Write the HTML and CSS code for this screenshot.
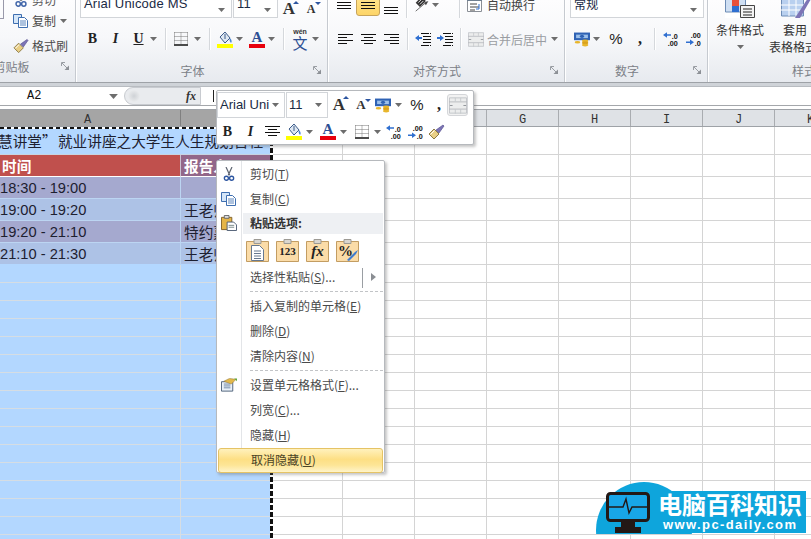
FILE: index.html
```html
<!DOCTYPE html>
<html lang="zh-CN">
<head>
<meta charset="utf-8">
<title>Excel</title>
<link rel="stylesheet" href="styles.css">
</head>
<body>
<svg class="sprite" width="0" height="0" aria-hidden="true">
  <defs>
    <symbol id="arrow" viewBox="0 0 7 4"><path d="M0 0h7L3.500 4z" fill="#6d6d6d"/></symbol>
    <symbol id="launcher" viewBox="0 0 9 9"><path d="M.5 4V.5H4M1 1l6 6" fill="none" stroke="#9a9ea4"/><path d="M8 3.500V8H3.500z" fill="#8c9096"/></symbol>
    <symbol id="copy" viewBox="0 0 16 14"><path d="M.5.500h8v9h-8z" fill="#d5e6f8" stroke="#3f6fb0"/><path d="M5.500 3.500h6l3 3v7h-9z" fill="#fff" stroke="#3f6fb0"/><path d="M7 7h6M7 9h6M7 11h6" stroke="#5d86bd"/></symbol>
    <symbol id="brush" viewBox="0 0 17 16"><path d="M1 10l5-5 5 5-5 5z" fill="#e9cf86" stroke="#8c7a45"/><path d="M2.500 10.500l4-4" stroke="#fff"/><path d="M8 6l7-5 1 1-5 7z" fill="#7d74b6" stroke="#4c4788" stroke-width=".6"/></symbol>
    <symbol id="fill" viewBox="0 0 16 17"><path d="M3 6l5-5 5 6-5 5z" fill="#dfe8f2" stroke="#3d5c8a"/><path d="M8 3v5" stroke="#3d5c8a"/><path d="M13 7c2 2 2 4 1 5-1-1-2-3-1-5z" fill="#4a86d0"/><path d="M0 13h16v4H0z" fill="#ffff00"/></symbol>
    <symbol id="borders" viewBox="0 0 14 14"><path d="M.5.500h13M.5 4.500h13M.5 8.500h13M.5.500v12M7 .5v12M13.500.500v12" fill="none" stroke="#777" stroke-dasharray="1 1"/><path d="M0 13h14" stroke="#111" stroke-width="1.500"/></symbol>
    <symbol id="align-c" viewBox="0 0 15 11"><path d="M0 .5h15M3 3.500h9M0 6.500h15M3 9.500h9" stroke="#111"/></symbol>
    <symbol id="align-l" viewBox="0 0 15 11"><path d="M0 .5h15M0 3.500h9M0 6.500h15M0 9.500h9" stroke="#111"/></symbol>
    <symbol id="align-r" viewBox="0 0 15 11"><path d="M0 .5h15M6 3.500h9M0 6.500h15M6 9.500h9" stroke="#111"/></symbol>
    <symbol id="lines" viewBox="0 0 14 8"><path d="M0 .5h14M0 3.500h14M0 6.500h14" stroke="#111"/></symbol>
    <symbol id="indent-l" viewBox="0 0 16 14"><path d="M6 1.500h10M8 4.500h8M8 7.500h8M8 10.500h8M6 13.500h10" stroke="#111" stroke-dasharray="8 1"/><path d="M0 6l4-3v2h3v2H4v2z" fill="#2f6fd0"/></symbol>
    <symbol id="indent-r" viewBox="0 0 16 14"><path d="M6 1.500h10M8 4.500h8M8 7.500h8M8 10.500h8M6 13.500h10" stroke="#111" stroke-dasharray="8 1"/><path d="M7 6L3 3v2H0v2h3v2z" fill="#2f6fd0"/></symbol>
    <symbol id="orient" viewBox="0 0 20 20"><path d="M2 9l7-7 5 5-7 7z" fill="#333"/><path d="M5 9l4-4M7 11l4-4" stroke="#fff"/><path d="M2 19l13-11" stroke="#555"/><path d="M14 12l3-5-5 2z" fill="#444"/></symbol>
    <symbol id="wrap" viewBox="0 0 15 14"><path d="M.5.500h14v13H.5z" fill="#fff" stroke="#8a8f96"/><path d="M0 0h15v3H0z" fill="#6f7f90"/><path d="M3 6h7M3 9h9M3 12h5" stroke="#444"/><path d="M12 6v5h-3" fill="none" stroke="#2f6fd0"/></symbol>
    <symbol id="merge" viewBox="0 0 20 18"><path d="M.5.500h19v17H.5z" fill="#eceded" stroke="#bfc2c6"/><path d="M0 5h20M0 13h20" stroke="#b5b8bc"/><path d="M7 .5v4M13 .5v4M7 13v5M13 13v5" stroke="#c5c8cc"/><path d="M1 9h3M16 9h3" stroke="#8b8f94"/></symbol>
    <symbol id="money" viewBox="0 0 23 20"><path d="M0 0h23v11H0z" fill="#2f62b4"/><path d="M3 3h17v5H3z" fill="#9cc0ea"/><ellipse cx="11.500" cy="5.500" rx="3" ry="2.500" fill="#2f62b4"/><ellipse cx="16" cy="12" rx="4.500" ry="2" fill="#e8b62c"/><ellipse cx="16" cy="15" rx="4.500" ry="2" fill="#d9a21d"/><ellipse cx="16" cy="18" rx="4.500" ry="2" fill="#e8b62c"/><ellipse cx="5" cy="14" rx="4" ry="1.800" fill="#e8b62c"/></symbol>
    <symbol id="dec-more" viewBox="0 0 20 17"><path d="M0 3.500L5 0v2.500h5v2H5V7z" fill="#2f6fd0"/><text x="11" y="8" class="dec-t">.0</text><text x="6" y="17" class="dec-t">.00</text></symbol>
    <symbol id="dec-less" viewBox="0 0 20 17"><text x="6" y="7" class="dec-t">.00</text><path d="M10 12.500L5 9v2.500H0v2h5V16z" fill="#2f6fd0"/><text x="11" y="17" class="dec-t">.0</text></symbol>
    <symbol id="scissors" viewBox="0 0 14 20"><path d="M3 0l5 11M11 0L6 11" stroke="#5d6470" stroke-width="1.600"/><circle cx="3.500" cy="15" r="2.700" fill="none" stroke="#2c55a0" stroke-width="1.800"/><circle cx="10.500" cy="15" r="2.700" fill="none" stroke="#2c55a0" stroke-width="1.800"/></symbol>
    <symbol id="paste" viewBox="0 0 17 17"><path d="M.5 2.500h11v13H.5z" fill="#e5b548" stroke="#80602a"/><path d="M3.500.5h5v3h-5z" fill="#ddd" stroke="#666"/><path d="M6.500 7.500h7l3 3v6h-10z" fill="#fff" stroke="#4d5c72"/><path d="M8 11h6M8 13h6" stroke="#788"/></symbol>
    <symbol id="cellfmt" viewBox="0 0 17 14"><path d="M.5 3.500h12v10H.5z" fill="#eaf1f9" stroke="#4c5f78"/><path d="M3 6h7M3 8h7M3 10h7" stroke="#6f87a5"/><path d="M3 3l6-3 7 1-5 5z" fill="#e2b84a" stroke="#8a7030" stroke-width=".5"/><path d="M14 0h3v3z" fill="#62a83a"/></symbol>
    <symbol id="clip" viewBox="0 0 23 23"><path d="M.5 2.500h22v20H.5z" fill="#fbdca8" stroke="#c39d62"/><path d="M8 .5h7v4H8z" fill="#d9d6d0" stroke="#9c9a94"/></symbol>
    <symbol id="doc" viewBox="0 0 13 16"><path d="M.5.500h8l4 4v11H.5z" fill="#fff" stroke="#66788f"/><path d="M3 6h7M3 8.500h7M3 11h7M3 13.500h7" stroke="#66788f"/></symbol>
  </defs>
</svg>

<div class="app">
  <header class="ribbon">
    <section class="group g-clip">
      <div class="g-body clip-rows">
        <div class="clip-row cut"><svg class="ic16"><use href="#scissors"/></svg><span>剪切</span></div>
        <div class="clip-row"><svg class="ic16"><use href="#copy"/></svg><span>复制</span><svg class="ar"><use href="#arrow"/></svg></div>
        <div class="clip-row"><svg class="ic16"><use href="#brush"/></svg><span>格式刷</span></div>
      </div>
      <footer class="g-label"><span class="lbl-clip">剪贴板</span><svg class="launch"><use href="#launcher"/></svg></footer>
    </section>

    <section class="group g-font">
      <div class="g-body">
        <div class="r1">
          <div class="combo c-font"><span>Arial Unicode MS</span><svg class="ar"><use href="#arrow"/></svg></div>
          <div class="combo c-size"><span>11</span><svg class="ar"><use href="#arrow"/></svg></div>
          <span class="big-a">A</span><span class="small-a">A</span>
        </div>
        <div class="r2">
          <span class="tb b">B</span><span class="tb i">I</span><span class="tb u">U</span><svg class="ar"><use href="#arrow"/></svg>
          <i class="sep"></i>
          <svg class="ic14 wide"><use href="#borders"/></svg><svg class="ar"><use href="#arrow"/></svg>
          <i class="sep"></i>
          <svg class="icfill"><use href="#fill"/></svg><svg class="ar"><use href="#arrow"/></svg>
          <span class="fc">A</span><svg class="ar"><use href="#arrow"/></svg>
          <i class="sep"></i>
          <span class="wen"><small>wén</small>文</span><svg class="ar"><use href="#arrow"/></svg>
        </div>
      </div>
      <footer class="g-label"><span>字体</span><svg class="launch"><use href="#launcher"/></svg></footer>
    </section>

    <section class="group g-align">
      <div class="g-body">
        <div class="r1">
          <svg class="ln top"><use href="#lines"/></svg>
          <span class="on"><svg class="ln"><use href="#lines"/></svg></span>
          <svg class="ln low"><use href="#lines"/></svg>
          <i class="sep s1"></i>
          <svg class="ic20"><use href="#orient"/></svg><svg class="ar"><use href="#arrow"/></svg>
          <i class="sep s2"></i>
          <div class="txt-btn"><svg class="ic15"><use href="#wrap"/></svg><span>自动换行</span></div>
        </div>
        <div class="r2">
          <svg class="al"><use href="#align-l"/></svg><svg class="al"><use href="#align-c"/></svg><svg class="al"><use href="#align-r"/></svg>
          <i class="sep s1"></i>
          <svg class="ind"><use href="#indent-l"/></svg><svg class="ind"><use href="#indent-r"/></svg>
          <i class="sep s2"></i>
          <div class="txt-btn off"><svg class="ic-merge"><use href="#merge"/></svg><span>合并后居中</span><svg class="ar"><use href="#arrow"/></svg></div>
        </div>
      </div>
      <footer class="g-label"><span>对齐方式</span><svg class="launch"><use href="#launcher"/></svg></footer>
    </section>

    <section class="group g-num">
      <div class="g-body">
        <div class="r1"><div class="combo c-num"><span>常规</span><svg class="ar"><use href="#arrow"/></svg></div></div>
        <div class="r2">
          <svg class="money"><use href="#money"/></svg><svg class="ar"><use href="#arrow"/></svg>
          <span class="pct">%</span><span class="cma">,</span>
          <i class="sep"></i>
          <svg class="dec"><use href="#dec-more"/></svg><svg class="dec"><use href="#dec-less"/></svg>
        </div>
      </div>
      <footer class="g-label"><span>数字</span><svg class="launch"><use href="#launcher"/></svg></footer>
    </section>

    <section class="group g-style">
      <div class="g-body styles">
        <div class="big-btn b1">
          <svg class="st-ic" viewBox="0 0 30 18"><path d="M0 0h30v18H0z" fill="#fff"/><path d="M.5-2h20v14H.5z" fill="#cfdff3" stroke="#6d8cb5"/><path d="M7-2h7v8H7z" fill="#e8503a"/><path d="M7 6h7v6H7z" fill="#2f6fd0"/><path d="M15.500 5.500h14v12h-14z" fill="#f4f4f4" stroke="#444"/><path d="M18 9h9M18 12h9M18 15h9" stroke="#222"/></svg>
          <span>条件格式</span><svg class="ar"><use href="#arrow"/></svg>
        </div>
        <div class="big-btn b2">
          <svg class="st-ic" viewBox="0 0 30 18"><path d="M.5-2h22v18H.5z" fill="#b9d0ef" stroke="#6d8cb5"/><path d="M8-2v18M15-2v18M0 5h23M0 10h23" stroke="#fff"/><path d="M14 18L27-2l3 1-11 19z" fill="#7d74b6"/></svg>
          <span class="b2-top">套用</span><span>表格格式</span>
        </div>
      </div>
      <footer class="g-label"><span>样式</span></footer>
    </section>
  </header>

  <div class="gap-band"></div>

  <div class="fbar">
    <div class="namebox"><span>A2</span><svg class="ar dark"><use href="#arrow"/></svg></div>
    <div class="capsule"><i class="knob"></i><span class="fx">fx</span></div>
    <div class="finput"><span class="caret"></span><span class="ftext">慧讲堂</span></div>
  </div>
  <div class="fgap"></div>

  <main class="sheet">
    <div class="cols">
      <div class="col sel a">A</div><div class="col sel b"></div>
      <div class="col"></div><div class="col"></div><div class="col"></div>
      <div class="col">G</div><div class="col">H</div><div class="col">I</div><div class="col">J</div><div class="col">K</div>
    </div>
    <div class="row title"><div class="title-cell">慧讲堂” 就业讲座之大学生人生规划日程</div><div class="rest"></div></div>
    <div class="row h22"><div class="c a head">时间</div><div class="c b head2">报告人</div><div class="rest"></div></div>
    <div class="row h22"><div class="c a odd">18:30 - 19:00</div><div class="c b odd"></div><div class="rest"></div></div>
    <div class="row h22"><div class="c a even">19:00 - 19:20</div><div class="c b even">王老师</div><div class="rest"></div></div>
    <div class="row h22"><div class="c a odd">19:20 - 21:10</div><div class="c b odd">特约嘉宾</div><div class="rest"></div></div>
    <div class="row h22 last"><div class="c a even">21:10 - 21:30</div><div class="c b even">王老师</div><div class="rest"></div></div>
    <div class="row"><div class="c a"></div><div class="c b"></div><div class="rest"></div></div>
    <div class="row"><div class="c a"></div><div class="c b"></div><div class="rest"></div></div>
    <div class="row"><div class="c a"></div><div class="c b"></div><div class="rest"></div></div>
    <div class="row"><div class="c a"></div><div class="c b"></div><div class="rest"></div></div>
    <div class="row"><div class="c a"></div><div class="c b"></div><div class="rest"></div></div>
    <div class="row"><div class="c a"></div><div class="c b"></div><div class="rest"></div></div>
    <div class="row"><div class="c a"></div><div class="c b"></div><div class="rest"></div></div>
    <div class="row"><div class="c a"></div><div class="c b"></div><div class="rest"></div></div>
    <div class="row"><div class="c a"></div><div class="c b"></div><div class="rest"></div></div>
    <div class="row"><div class="c a"></div><div class="c b"></div><div class="rest"></div></div>
    <div class="row"><div class="c a"></div><div class="c b"></div><div class="rest"></div></div>
    <div class="row"><div class="c a"></div><div class="c b"></div><div class="rest"></div></div>
    <div class="row"><div class="c a"></div><div class="c b"></div><div class="rest"></div></div>
    <div class="row"><div class="c a"></div><div class="c b"></div><div class="rest"></div></div>
    <div class="row"><div class="c a"></div><div class="c b"></div><div class="rest"></div></div>
    <div class="row"><div class="c a"></div><div class="c b"></div><div class="rest"></div></div>
    <i class="ants top"></i>
    <i class="ants right"></i>
  </main>

  <div class="mini">
    <div class="mini-row">
      <div class="combo m-font"><span>Arial Uni</span><svg class="ar"><use href="#arrow"/></svg></div>
      <div class="combo m-size"><span>11</span><svg class="ar"><use href="#arrow"/></svg></div>
      <span class="m-a big">A</span><span class="m-a">A</span>
      <svg class="money"><use href="#money"/></svg><svg class="ar"><use href="#arrow"/></svg>
      <span class="pct">%</span><span class="cma">,</span>
      <span class="m-merge"><svg class="ic-merge"><use href="#merge"/></svg></span>
    </div>
    <div class="mini-row second">
      <span class="tb b">B</span><span class="tb i">I</span><svg class="al"><use href="#align-c"/></svg>
      <svg class="icfill"><use href="#fill"/></svg><svg class="ar"><use href="#arrow"/></svg>
      <span class="fc">A</span><svg class="ar"><use href="#arrow"/></svg>
      <svg class="ic14"><use href="#borders"/></svg><svg class="ar"><use href="#arrow"/></svg>
      <svg class="dec"><use href="#dec-more"/></svg><svg class="dec"><use href="#dec-less"/></svg>
      <svg class="ic-brush"><use href="#brush"/></svg>
    </div>
  </div>

  <nav class="menu">
    <div class="item"><svg class="mi scis"><use href="#scissors"/></svg><span>剪切(<u>T</u>)</span></div>
    <div class="item"><svg class="mi"><use href="#copy"/></svg><span>复制(<u>C</u>)</span></div>
    <div class="item heading"><svg class="mi up"><use href="#paste"/></svg><strong>粘贴选项:</strong></div>
    <div class="paste-row">
      <span class="pbtn"><svg class="clip"><use href="#clip"/></svg><svg class="doc"><use href="#doc"/></svg></span>
      <span class="pbtn"><svg class="clip"><use href="#clip"/></svg><b class="n123">123</b></span>
      <span class="pbtn"><svg class="clip"><use href="#clip"/></svg><b class="nfx">fx</b></span>
      <span class="pbtn"><svg class="clip"><use href="#clip"/></svg><b class="npct">%</b><svg class="pbr" viewBox="0 0 12 12"><path d="M0 11l8-8 3-2-2 4-7 7z" fill="#3f7bd0"/></svg></span>
    </div>
    <div class="item special"><span>选择性粘贴(<u>S</u>)...</span><i class="vline"></i><i class="tri"></i></div>
    <div class="dash"></div>
    <div class="item"><span>插入复制的单元格(<u>E</u>)</span></div>
    <div class="item"><span>删除(<u>D</u>)</span></div>
    <div class="item"><span>清除内容(<u>N</u>)</span></div>
    <div class="dash"></div>
    <div class="item"><svg class="mi"><use href="#cellfmt"/></svg><span>设置单元格格式(<u>F</u>)...</span></div>
    <div class="item"><span>列宽(<u>C</u>)...</span></div>
    <div class="item"><span>隐藏(<u>H</u>)</span></div>
    <div class="item active"><span>取消隐藏(<u>U</u>)</span></div>
  </nav>

  <aside class="logo">
    <div class="disc">
      <svg class="screen" viewBox="0 0 44 41"><rect x="1.500" y="1.500" width="41" height="27" rx="3" fill="#18a6e8" stroke="#231815" stroke-width="3"/><path d="M3 15h14l3-8 3 14 3-6h15" fill="none" stroke="#231815" stroke-width="1.400"/><path d="M15 30h14v5H15zM9 35h26v6H9z" fill="#231815"/></svg>
    </div>
    <div class="plate"><div class="l-cn">电脑百科知识</div><div class="l-en">www.pc-daily.com</div></div>
  </aside>
</div>
</body>
</html>
```

FILE: styles.css
```css
* { box-sizing: border-box; }
html, body { margin: 0; padding: 0; }
body { width: 811px; height: 539px; overflow: hidden; background: #fff; color: #333;
  font: 12px "Noto Sans CJK SC", "Liberation Sans", sans-serif; }
.sprite { position: absolute; }
.app { position: relative; width: 811px; height: 539px; overflow: hidden; }
svg { display: block; flex: none; }
i { display: block; flex: none; font-style: normal; }
.dec-t { font: bold 9px "Liberation Sans", sans-serif; fill: #111; }

/* ribbon */
.ribbon { display: flex; height: 82px; background: linear-gradient(#fdfdfe 0, #f7f8fa 45%, #e7eaef 100%); }
.group { display: flex; flex-direction: column; flex: none; height: 82px; border-right: 1px solid #c6cad0; box-shadow: 1px 0 0 #fff; }
.g-clip { width: 76px; }
.g-font { width: 252px; }
.g-align { width: 237px; }
.g-num { width: 143px; }
.g-style { flex: 1; border-right: 0; box-shadow: none; }
.g-body { height: 62px; flex: none; }
.g-label { height: 20px; display: flex; align-items: flex-start; justify-content: center; position: relative; color: #7b8087; font-size: 12px; line-height: 18px; padding-right: 18px; }
.g-style .g-label { padding: 0 0 0 84px; justify-content: flex-start; white-space: nowrap; }
.launch { width: 9px; height: 9px; position: absolute; right: 5px; top: 4px; }
.lbl-clip { margin-left: -34px; }
.ar { width: 7px; height: 4px; }
.ar.dark { width: 9px; height: 5px; }
.r1 { height: 18px; display: flex; align-items: flex-end; }
.r2 { display: flex; align-items: center; height: 24px; margin-top: 9px; }
.sep { width: 1px; height: 22px; background: #d5d8dc; box-shadow: 1px 0 0 #fff; }

/* clipboard */
.clip-rows { display: flex; flex-direction: column; justify-content: flex-end; height: 58px; padding-left: 13px; position: relative; }
.clip-rows::before { content: ""; position: absolute; left: -2px; top: -4px; width: 4px; height: 21px; border: 1px solid #99a; }
.clip-row { display: flex; align-items: center; height: 25px; flex: none; color: #4a4a4a; }
.clip-row.cut { height: 16px; margin-top: -16px; opacity: .9; align-items: flex-end; overflow: hidden; }
.clip-row span { margin-left: 3px; }
.clip-row .ar { margin-left: 4px; }
.ic16 { width: 16px; height: 16px; }

/* font group */
.g-font .r1 { padding-left: 4px; }
.combo { display: flex; align-items: center; justify-content: space-between; background: #fff; border: 1px solid #d2d5d9; color: #1a2a44; font: 13px/16px "Liberation Sans", sans-serif; letter-spacing: .2px; white-space: nowrap; }
.g-body .combo { height: 40px; margin-top: -22px; padding: 0 6px 0 3px; align-items: flex-end; padding-bottom: 5px; }
.c-font { width: 152px; }
.c-size { width: 45px; margin-left: 1px; }
.big-a, .small-a, .m-a { position: relative; text-align: center; width: 22px; color: #333; font-family: "Liberation Serif", serif; font-weight: bold; }
.big-a { font-size: 17px; line-height: 18px; }
.small-a { font-size: 12px; line-height: 18px; }
.big-a::after, .m-a.big::after { content: ""; position: absolute; right: 1px; top: 1px; border-left: 3px solid transparent; border-right: 3px solid transparent; border-bottom: 3px solid #2c55a0; }
.small-a::after, .m-a:not(.big)::after { content: ""; position: absolute; right: 1px; top: 2px; border-left: 3px solid transparent; border-right: 3px solid transparent; border-top: 3px solid #2c55a0; }
.g-font .r2 { padding-left: 5px; }
.tb { width: 23px; height: 20px; text-align: center; color: #222; font: bold 14px/20px "Liberation Serif", serif; }
.tb.i { font-style: italic; }
.tb.u { text-decoration: underline; }
.g-font .sep { margin: 0 4px 0 8px; }
.g-font .sep + .wide { margin: 0 6px 0 4px; }
.g-font .sep + .icfill { margin: 0 3px 0 3px; }
.g-font .fc { margin-left: 3px; }
.g-font .wen + .ar { margin-left: 1px; }
.ic14 { width: 14px; height: 14px; }
.icfill { width: 16px; height: 17px; }
.fc { width: 22px; text-align: center; color: #2c4f94; font: bold 15px/13px "Liberation Serif", serif; position: relative; height: 17px; }
.fc::after { content: ""; position: absolute; left: 3px; right: 3px; bottom: 0; height: 4px; background: #e8000c; }
.wen { width: 22px; margin-left: 1px; text-align: center; color: #2c4f94; font-size: 15px; line-height: 13px; height: 20px; position: relative; padding-top: 7px; }
.wen small { position: absolute; left: 0; right: 0; top: -1px; font: bold 7px/8px "Liberation Sans", sans-serif; color: #333; }

/* alignment */
.g-align .r1 { padding-left: 9px; align-items: flex-start; }
.g-align .r2 { padding-left: 10px; }
.ln { width: 14px; height: 8px; }
.on { width: 24px; height: 20px; margin: -4px 0 0 5px; display: flex; align-items: center; justify-content: center; background: linear-gradient(#ffe38f, #fdd568); border: 1px solid #c7a45b; border-radius: 3px; }
.g-align .r1 .ln.top { margin: 2px 0 0; }
.g-align .r1 .ln.low { margin: 7px 0 0 4px; }
.g-align .r1 .ic20 { margin: -5px 0 0 2px; width: 17px; height: 17px; }
.g-align .r1 .ar { margin: 3px 0 0 1px; }
.g-align .s1 { margin: 0 5px 0 8px; }
.g-align .s2 { margin: 0 7px 0 20px; }
.g-align .r1 .sep { margin-top: -4px; }
.al { width: 15px; height: 11px; }
.g-align .r2 .al + .al { margin-left: 8px; }
.ind { width: 16px; height: 14px; margin-left: 2px; }
.ind + .ind { margin-left: 6px; }
.g-align .r2 .s2 { margin-left: 7px; }
.txt-btn { display: flex; align-items: center; gap: 5px; color: #444; white-space: nowrap; }
.txt-btn.off { color: #9a9da2; gap: 3px; }
.ic15 { width: 15px; height: 14px; }
.ic-merge { width: 16px; height: 15px; }
.g-align .r1 .txt-btn { margin-top: -4px; }
.txt-btn.off .ar { margin-left: 1px; }

/* number */
.c-num { width: 134px; margin-left: 5px; font-family: "Noto Sans CJK SC", sans-serif; font-size: 12px; }
.money { width: 16px; height: 15px; }
.g-num .r2 { padding-left: 9px; }
.g-num .ar { margin-left: 3px; }
.pct { width: 26px; text-align: center; font: 15px/20px "Liberation Sans", sans-serif; color: #222; margin-left: 3px; }
.cma { width: 20px; text-align: center; font: bold 16px/14px "Liberation Serif", serif; color: #222; margin-left: 1px; }
.g-num .sep { margin: 0 8px 0 4px; }
.dec { width: 16px; height: 14px; }
.g-num .dec + .dec { margin-left: 7px; }

/* styles */
.styles { display: flex; padding-left: 7px; }
.big-btn { display: flex; flex-direction: column; align-items: center; flex: none; color: #333; line-height: 17px; }
.b1 { width: 50px; }
.b2 { width: 50px; margin-left: 3px; }
.b2 .st-ic { margin-left: 6px; }
.b2-top { margin-left: 4px; }
.st-ic { width: 30px; height: 18px; margin-bottom: 3px; }
.big-btn .ar { margin-top: 7px; }
.big-btn span { white-space: nowrap; }

/* formula bar */
.gap-band { height: 5px; background: #cfd3d8; border-top: 1px solid #9ea2a7; border-bottom: 1px solid #b8bcc1; }
.fbar { display: flex; height: 19px; background: #fff; border-bottom: 1px solid #a4a7ab; }
.namebox { width: 124px; display: flex; align-items: center; justify-content: space-between; padding: 0 6px 0 27px; font: 12px "Liberation Mono", monospace; color: #111; }
.capsule { width: 77px; position: relative; background: #e9ebee; border-radius: 10px 0 0 10px; border: 1px solid #c8cbd0; display: flex; justify-content: flex-end; align-items: center; padding-right: 4px; }
.knob { position: absolute; left: 3px; top: 2px; width: 12px; height: 12px; border-radius: 50%; background: radial-gradient(#cfd2d6, #f4f5f6); }
.fx { font: italic bold 12px "Liberation Serif", serif; color: #333; }
.finput { flex: 1; display: flex; align-items: center; padding-left: 12px; }
.caret { width: 1px; height: 12px; background: #222; }
.ftext { font-size: 14px; margin-left: 2px; color: #111; }
.fgap { height: 3px; background: #fff; }

/* sheet */
.sheet { position: relative; }
.cols { display: flex; height: 18px; background: #dfe2e6; border-top: 1px solid #9ea2a7; border-bottom: 1px solid #9ea2a7; font: 12px/20px "Liberation Mono", monospace; color: #333; }
.col { width: 72px; flex: none; text-align: center; border-right: 1px solid #a9acb0; }
.col.sel { background: #a5a5a5; border-right-color: #808080; }
.col.a { width: 181px; padding-right: 5px; }
.col.b { width: 90px; }
.row { display: flex; height: 18px; }
.row.h22 { height: 22px; }
.row.title { height: 28px; }
.c { flex: none; background: #b3d7ff; border-bottom: 1px solid #d6dde3; border-right: 1px solid #d6dde3; height: 100%; overflow: hidden; white-space: nowrap; color: #1d2030; font: 14.67px/22px "Liberation Sans", "Noto Sans CJK SC", sans-serif; }
.c.a { width: 181px; }
.c.b { width: 90px; padding-left: 3px; font-family: "Noto Sans CJK SC", sans-serif; }
.rest { flex: 1; border-bottom: 1px solid #d4d4d4; background: repeating-linear-gradient(to right, transparent 0 71px, #d4d4d4 71px 72px); }
.title-cell { width: 271px; flex: none; background: #b3d7ff; overflow: hidden; white-space: nowrap; text-indent: -2px; word-spacing: -2px; font: 14.67px/27px "Noto Sans CJK SC", sans-serif; color: #1d2030; border-bottom: 1px solid #c7d4e2; }
.c.head { background: #c0504d; color: #fff; font-weight: bold; font-family: "Noto Sans CJK SC", sans-serif; padding-left: 2px; border-bottom-color: #fff; border-right-color: #c9c0d0; line-height: 21px; }
.c.head2 { background: #92678a; color: #fff; font-weight: bold; border-bottom-color: #fff; border-right: 0; line-height: 21px; }
.c.odd { background: #a5a9cf; border-color: #bcd5f2; }
.c.even { background: #adc2e6; border-color: #bcd5f2; }
.last .c { border-bottom-color: #b3d7ff; }
.ants { position: absolute; }
.ants.top { left: 0; top: 18px; width: 271px; height: 2px; background: repeating-linear-gradient(to right, #111 0 4px, #fff 4px 7px); }
.ants.right { left: 270px; top: 18px; width: 3px; height: 420px; background: repeating-linear-gradient(to bottom, #111 0 5px, #fff 5px 7px); }

/* mini toolbar */
.mini { position: absolute; left: 216px; top: 90px; width: 258px; height: 55px; background: #fff; border: 1px solid #b6b9bd; border-radius: 2px; box-shadow: 2px 2px 3px rgba(90,90,90,.35); padding: 1px 0 0 0; }
.mini-row { display: flex; align-items: center; height: 26px; }
.mini-row.second { margin: 1px 0 0 -1px; height: 25px; }
.mini .combo { height: 26px; font-size: 13px; letter-spacing: 0; padding: 0 5px 0 2px; }
.m-font { width: 68px; }
.m-size { width: 42px; margin-left: 1px; }
.m-font span { display: block; width: 50px; overflow: hidden; }
.m-a { font-size: 13px; }
.m-a.big { font-size: 17px; }
.mini-row .money { margin-left: 3px; }
.mini-row .money + .ar { margin-left: 4px; }
.mini-row .pct { width: 24px; margin-left: 3px; }
.mini-row .cma { margin: 0 -2px 0 0; }
.m-merge { width: 21px; height: 22px; background: #f2f2f2; border: 1px solid #d4d6d9; border-radius: 3px; display: flex; align-items: center; justify-content: center; }
.m-merge .ic-merge { width: 18px; height: 17px; }
.second .al { margin-left: 3px; }
.second .icfill { margin-left: 6px; }
.second .icfill + .ar { margin: 0 3px 0 4px; }
.second .fc { width: 16px; margin-left: 4px; }
.second .fc::after { left: 0; right: 0; }
.second .fc + .ar { margin: 0 3px 0 4px; }
.second .ic14 { margin: 0 1px 0 5px; }
.second .ic14 + .ar { margin: 0 0 0 4px; }
.second .dec { margin-left: 5px; }
.second .dec + .dec { margin-left: 6px; }
.ic-brush { width: 17px; height: 16px; margin-left: 4px; }

/* context menu */
.menu { position: absolute; left: 216px; top: 160px; width: 169px; height: 313px; background: linear-gradient(to right, #fff 0 24px, #e3e5e8 24px 25px, #fff 25px); border: 1px solid #b6b9bd; border-radius: 2px; box-shadow: 2px 2px 3px rgba(90,90,90,.35); padding-top: .500px; color: #4a4a4a; font-size: 12px; }
.item { display: flex; align-items: center; height: 25px; padding: 0 0 2px 33px; position: relative; white-space: nowrap; }
.item u { text-decoration: underline; }
.mi { position: absolute; left: 4px; top: 5px; width: 16px; height: 14px; }
.mi.scis { left: 6px; width: 12px; height: 15px; top: 5px; }
.mi.up { top: 2px; height: 16px; }
.item.heading { height: 21px; background: #eef0f3; margin: 1px 1px 0 26px; padding-left: 7px; color: #333; }
.item.heading .mi { left: -22px; }
.item.heading strong { font-weight: bold; }
.paste-row { display: flex; gap: 7px; height: 31px; padding: 5px 0 0 29px; }
.pbtn { position: relative; width: 23px; height: 23px; flex: none; }
.clip { width: 23px; height: 23px; }
.doc { position: absolute; left: 5px; top: 6px; width: 13px; height: 16px; }
.pbtn b { position: absolute; left: 0; right: 0; text-align: center; font-family: "Liberation Serif", serif; color: #222; }
.n123 { top: 6px; font-size: 11px; line-height: 13px; }
.nfx { top: 4px; font-size: 15px; font-style: italic; line-height: 17px; }
.pbtn b.npct { top: 4px; font-size: 15px; line-height: 17px; text-align: left; padding-left: 2px; }
.pbr { position: absolute; right: 0; bottom: 1px; width: 12px; height: 12px; }
.vline { position: absolute; left: 145px; top: 3px; width: 1px; height: 20px; background: #9a9ea3; }
.tri { position: absolute; left: 154px; top: 8px; border-left: 5px solid #8a8e93; border-top: 4px solid transparent; border-bottom: 4px solid transparent; }
.dash { height: 3px; margin: 1px 1px 0 33px; border-top: 1px dashed #c2c4c7; }
.item.active { background: linear-gradient(#fff1bd 0, #fddf84 45%, #fde596 70%, #fff4c9 100%); border: 1px solid #e5c365; border-radius: 3px; margin: 0 1px; padding-left: 32px; height: 25px; color: #4a4326; }

/* watermark logo */
.logo { position: absolute; left: 596px; top: 482px; width: 215px; height: 52px; overflow: hidden; }
.disc { position: absolute; left: 0; top: 0; width: 96px; height: 96px; border-radius: 50%; background: #0ea5dc; }
.screen { position: absolute; left: 10px; top: 10px; width: 44px; height: 41px; }
.plate { position: absolute; left: 54px; top: 9px; width: 156px; height: 42px; background: #0ea5dc; color: #fff; padding-left: 8px; font-weight: bold; white-space: nowrap; }
.l-cn { font: bold 24px/25px "Noto Sans CJK SC", sans-serif; }
.l-en { font: bold 13px/14px "Liberation Sans", sans-serif; letter-spacing: 1.400px; padding: 2px 0 0 5px; }
```
